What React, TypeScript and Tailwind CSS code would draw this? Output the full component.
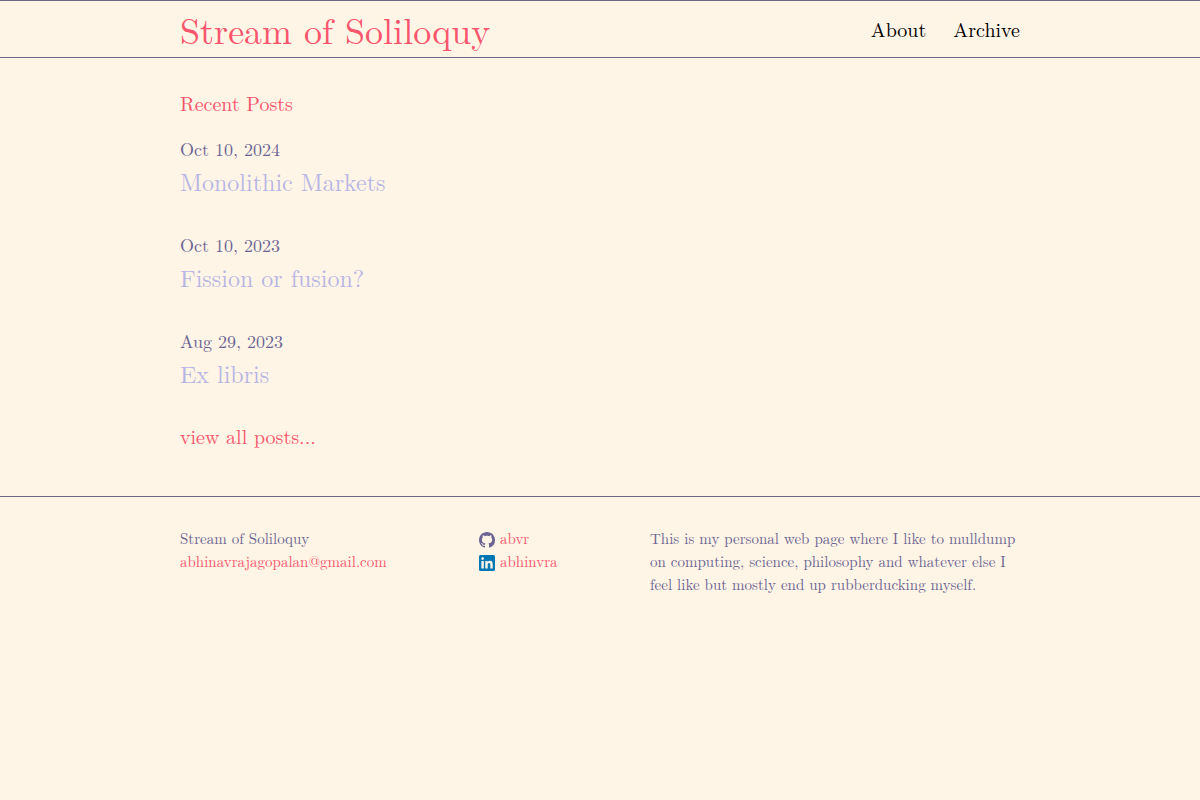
const posts = [
  { date: "Oct 10, 2024", title: "Monolithic Markets" },
  { date: "Oct 10, 2023", title: "Fission or fusion?" },
  { date: "Aug 29, 2023", title: "Ex libris" },
];

function GithubIcon() {
  return (
    <svg viewBox="0 0 16 16" className="mt-1 size-4 shrink-0 fill-[#6b6492]" aria-hidden="true">
      <path d="M8 0C3.58 0 0 3.58 0 8c0 3.54 2.29 6.53 5.47 7.59.4.07.55-.17.55-.38 0-.19-.01-.82-.01-1.49-2.01.37-2.53-.49-2.69-.94-.09-.23-.48-.94-.82-1.13-.28-.15-.68-.52-.01-.53.63-.01 1.08.58 1.23.82.72 1.21 1.87.87 2.33.66.07-.52.28-.87.51-1.07-1.78-.2-3.64-.89-3.64-3.95 0-.87.31-1.59.82-2.15-.08-.2-.36-1.02.08-2.12 0 0 .67-.21 2.2.82.64-.18 1.32-.27 2-.27s1.36.09 2 .27c1.53-1.04 2.2-.82 2.2-.82.44 1.1.16 1.92.08 2.12.51.56.82 1.27.82 2.15 0 3.07-1.87 3.75-3.65 3.95.29.25.54.73.54 1.48 0 1.07-.01 1.93-.01 2.2 0 .21.15.46.55.38A8.01 8.01 0 0 0 16 8c0-4.42-3.58-8-8-8Z" />
    </svg>
  );
}

function LinkedinIcon() {
  return (
    <svg viewBox="0 0 16 16" className="mt-1 size-4 shrink-0" aria-hidden="true">
      <rect width="16" height="16" rx="1.5" fill="#0077b5" />
      <path
        fill="#fff5e6"
        d="M2.4 6h2.4v7.6H2.4V6Zm1.2-3.8a1.38 1.38 0 1 1 0 2.76 1.38 1.38 0 0 1 0-2.76ZM6.3 6h2.27v1.04h.03c.32-.6 1.09-1.23 2.25-1.23 2.4 0 2.85 1.58 2.85 3.63v4.16h-2.37V9.9c0-.88-.02-2.01-1.23-2.01-1.22 0-1.41.96-1.41 1.95v3.76H6.3V6Z"
      />
    </svg>
  );
}

export default function App() {
  return (
    <div className="min-h-screen bg-[#fff5e6] font-['Latin_Modern_Roman','CMU_Serif','Liberation_Serif',serif] text-[#6b6492]">
      <header className="border-y border-[#6f6589]">
        <div className="mx-auto flex h-14 max-w-[900px] items-center justify-between px-[30px]">
          <a href="#" className="text-4xl leading-[56px] text-[#f9556d]">Stream of Soliloquy</a>
          <nav className="flex gap-[27px] text-xl leading-[30px] text-black">
            <a href="#about">About</a>
            <a href="#archive">Archive</a>
          </nav>
        </div>
      </header>
      <main className="mx-auto max-w-[900px] px-[30px] pt-[30px] pb-[45px]">
        <h1 className="text-xl leading-[30px] text-[#f9556d]">Recent Posts</h1>
        <ul className="mt-[17px] mb-7 space-y-[30px]">
          {posts.map((p) => (
            <li key={p.title}>
              <p className="text-lg leading-[27px]">{p.date}</p>
              <h2 className="text-2xl leading-[39px] text-[#b8b5e4]">
                <a href="#post">{p.title}</a>
              </h2>
            </li>
          ))}
        </ul>
        <p className="text-xl leading-[30px] text-[#f9556d]">
          <a href="#archive">view all posts...</a>
        </p>
      </main>
      <footer className="border-t border-[#6f6589]">
        <div className="mx-auto flex max-w-[900px] flex-wrap px-[30px] py-[29px] text-[15px] leading-[23px]">
          <div className="w-[299px]">
            <p>Stream of Soliloquy</p>
            <a href="mailto:abhinavrajagopalan@gmail.com" className="text-[#f9556d]">
              abhinavrajagopalan@gmail.com
            </a>
          </div>
          <ul className="w-[171px] text-[#f9556d]">
            <li>
              <a href="#github" className="flex items-center gap-[5px]">
                <GithubIcon />
                abvr
              </a>
            </li>
            <li>
              <a href="#linkedin" className="flex items-center gap-[5px]">
                <LinkedinIcon />
                abhinvra
              </a>
            </li>
          </ul>
          <p className="min-w-[300px] flex-1">
            This is my personal web page where I like to mulldump on computing, science, philosophy and whatever else I
            feel like but mostly end up rubberducking myself.
          </p>
        </div>
      </footer>
    </div>
  );
}
